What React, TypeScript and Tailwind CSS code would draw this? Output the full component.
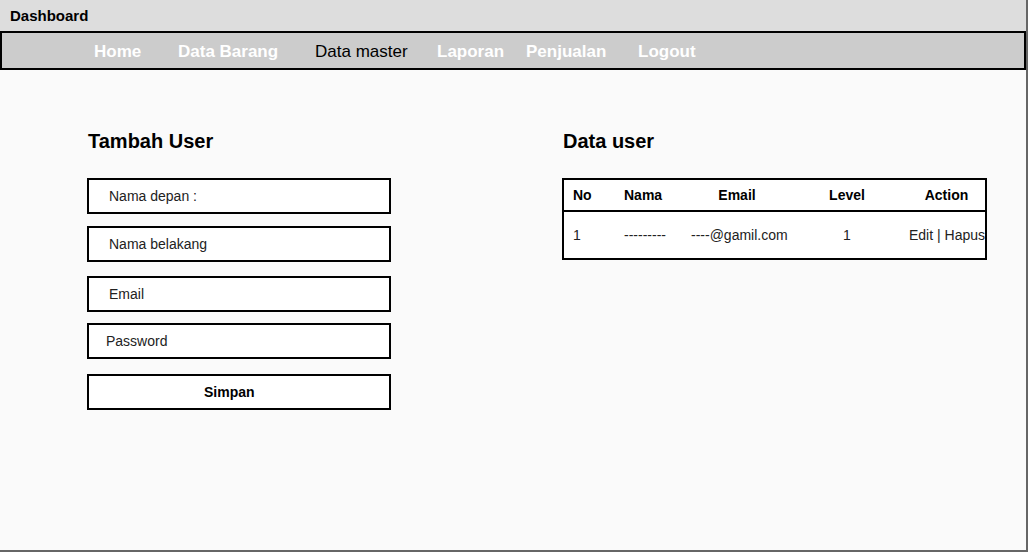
export default function App() {
  const font = { fontFamily: '"Liberation Sans", Arial, sans-serif' };
  const navItems: { label: string; w: string; active?: boolean }[] = [
    { label: "Home", w: "w-[84px]" },
    { label: "Data Barang", w: "w-[137px]" },
    { label: "Data master", w: "w-[122px]", active: true },
    { label: "Laporan", w: "w-[89px]" },
    { label: "Penjualan", w: "w-[112px]" },
    { label: "Logout", w: "w-[100px]" },
  ];
  return (
    <div
      className="w-[1028px] h-[552px] flex flex-col bg-[#fafafa] border-r-2 border-b-2 border-[#666666] overflow-hidden"
      style={font}
    >
      <div className="h-[31px] shrink-0 bg-[#dddddd] flex items-center pl-[10px] pt-[2px] text-[15px] font-bold text-black">
        Dashboard
      </div>
      <div className="h-[39px] shrink-0 bg-[#cccccc] border-2 border-black flex items-center pl-[92px] pt-[3px] text-[17px]">
        {navItems.map((n) => (
          <div
            key={n.label}
            className={`${n.w} shrink-0 whitespace-nowrap ${n.active ? "text-black font-normal" : "text-white font-bold"}`}
          >
            {n.label}
          </div>
        ))}
      </div>
      <div className="flex flex-1 pt-[58px] pl-[87px]">
        <div className="w-[304px] shrink-0 flex flex-col">
          <div className="mt-[1px] h-[24px] leading-[24px] text-[20px] font-bold text-black pl-[1px]">Tambah User</div>
          <div className="mt-[25px] h-[36px] border-2 border-black bg-white flex items-center pl-[20px] text-[14px] text-[#222222]">
            Nama depan :
          </div>
          <div className="mt-[12px] h-[36px] border-2 border-black bg-white flex items-center pl-[20px] text-[14px] text-[#222222]">
            Nama belakang
          </div>
          <div className="mt-[14px] h-[36px] border-2 border-black bg-white flex items-center pl-[20px] text-[14px] text-[#222222]">
            Email
          </div>
          <div className="mt-[11px] h-[36px] border-2 border-black bg-white flex items-center pl-[17px] text-[14px] text-[#222222]">
            Password
          </div>
          <div className="mt-[15px] h-[36px] border-2 border-black bg-white flex items-center pl-[115px] text-[14px] font-bold text-black">
            Simpan
          </div>
        </div>
        <div className="ml-[171px] w-[425px] shrink-0 flex flex-col">
          <div className="mt-[1px] h-[24px] leading-[24px] text-[20px] font-bold text-black pl-[1px]">Data user</div>
          <div className="mt-[25px] border-2 border-black bg-white overflow-hidden">
            <div className="h-[32px] flex items-center pt-[1px] border-b-2 border-black text-[14px] font-bold text-black whitespace-nowrap">
              <div className="w-[60px] pl-[9px] shrink-0">No</div>
              <div className="w-[60px] shrink-0">Nama</div>
              <div className="w-[110px] shrink-0 text-center pr-[4px]">Email</div>
              <div className="w-[106px] shrink-0 text-center">Level</div>
              <div className="flex-1 text-center pl-[8px]">Action</div>
            </div>
            <div className="h-[46px] flex items-center text-[14px] text-[#222222] whitespace-nowrap">
              <div className="w-[60px] pl-[9px] shrink-0">1</div>
              <div className="w-[60px] shrink-0">---------</div>
              <div className="w-[110px] shrink-0 pl-[7px]">----@gamil.com</div>
              <div className="w-[106px] shrink-0 text-center">1</div>
              <div className="flex-1 pl-[9px]">Edit | Hapus</div>
            </div>
          </div>
        </div>
      </div>
    </div>
  );
}
